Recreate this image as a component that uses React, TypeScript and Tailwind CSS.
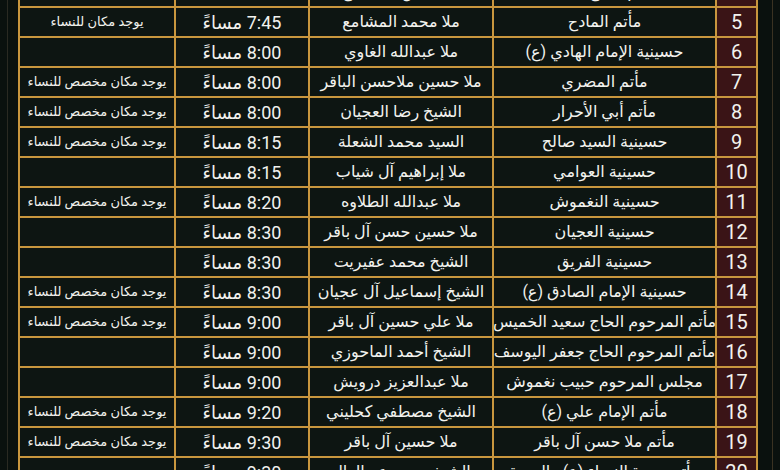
const rows: [string, string, string, string, string][] = [
  ["4", "مأتم الحاج أحمد", "ملا حسن المشامع", "7:30 مساءً", ""],
  ["5", "مأتم المادح", "ملا محمد المشامع", "7:45 مساءً", "يوجد مكان للنساء"],
  ["6", "حسينية الإمام الهادي (ع)", "ملا عبدالله الغاوي", "8:00 مساءً", ""],
  ["7", "مأتم المضري", "ملا حسين ملاحسن الباقر", "8:00 مساءً", "يوجد مكان مخصص للنساء"],
  ["8", "مأتم أبي الأحرار", "الشيخ رضا العجيان", "8:00 مساءً", "يوجد مكان مخصص للنساء"],
  ["9", "حسينية السيد صالح", "السيد محمد الشعلة", "8:15 مساءً", "يوجد مكان مخصص للنساء"],
  ["10", "حسينية العوامي", "ملا إبراهيم آل شياب", "8:15 مساءً", ""],
  ["11", "حسينية النغموش", "ملا عبدالله الطلاوه", "8:20 مساءً", "يوجد مكان مخصص للنساء"],
  ["12", "حسينية العجيان", "ملا حسين حسن آل باقر", "8:30 مساءً", ""],
  ["13", "حسينية الفريق", "الشيخ محمد عفيريت", "8:30 مساءً", ""],
  ["14", "حسينية الإمام الصادق (ع)", "الشيخ إسماعيل آل عجيان", "8:30 مساءً", "يوجد مكان مخصص للنساء"],
  ["15", "مأتم المرحوم الحاج سعيد الخميس", "ملا علي حسين آل باقر", "9:00 مساءً", "يوجد مكان مخصص للنساء"],
  ["16", "مأتم المرحوم الحاج جعفر اليوسف", "الشيخ أحمد الماحوزي", "9:00 مساءً", ""],
  ["17", "مجلس المرحوم حبيب نغموش", "ملا عبدالعزيز درويش", "9:00 مساءً", ""],
  ["18", "مأتم الإمام علي (ع)", "الشيخ مصطفي كحليني", "9:20 مساءً", "يوجد مكان مخصص للنساء"],
  ["19", "مأتم ملا حسن آل باقر", "ملا حسين آل باقر", "9:30 مساءً", "يوجد مكان مخصص للنساء"],
  ["20", "مأتم سيدة النساء (ع) - العودة", "الشيخ محمد عبدالعال", "9:30 مساءً", ""],
];

const cell = "flex h-[28px] items-center justify-center bg-[#0d1512] text-[#f2f2ee] whitespace-nowrap overflow-hidden";

export default function App() {
  return (
    <div
      className="flex h-[470px] w-[780px] overflow-hidden bg-[#0a110e]"
      style={{ fontFamily: 'Roboto, "DejaVu Sans", sans-serif' }}
    >
      {/* left margin */}
      <div className="w-[18px] shrink-0">
        <div className="h-full w-[8px] border-r border-[#2a2a22]" />
      </div>

      <div className="-mt-[24px] w-[740px] shrink-0">
        <div className="flex flex-col gap-[2px] bg-[#c8963e] p-[2px]" dir="rtl">
          {rows.map(([n, name, sheikh, time, note]) => (
            <div key={n} className="flex gap-[2px]">
              <div className={`${cell} w-[39px] bg-[#3a1416] text-[20px]`}>{n}</div>
              <div className={`${cell} w-[221px] text-[16px]`}>{name}</div>
              <div className={`${cell} w-[182px] text-[16px]`}>{sheikh}</div>
              <div className={`${cell} w-[132px] text-[18px]`}>{time}</div>
              <div className={`${cell} w-[154px] text-[13px]`}>{note}</div>
            </div>
          ))}
        </div>
      </div>

      {/* right margin */}
      <div className="w-[22px] shrink-0">
        <div className="h-full w-[15px] border-r border-[#3a3222]" />
      </div>
    </div>
  );
}
